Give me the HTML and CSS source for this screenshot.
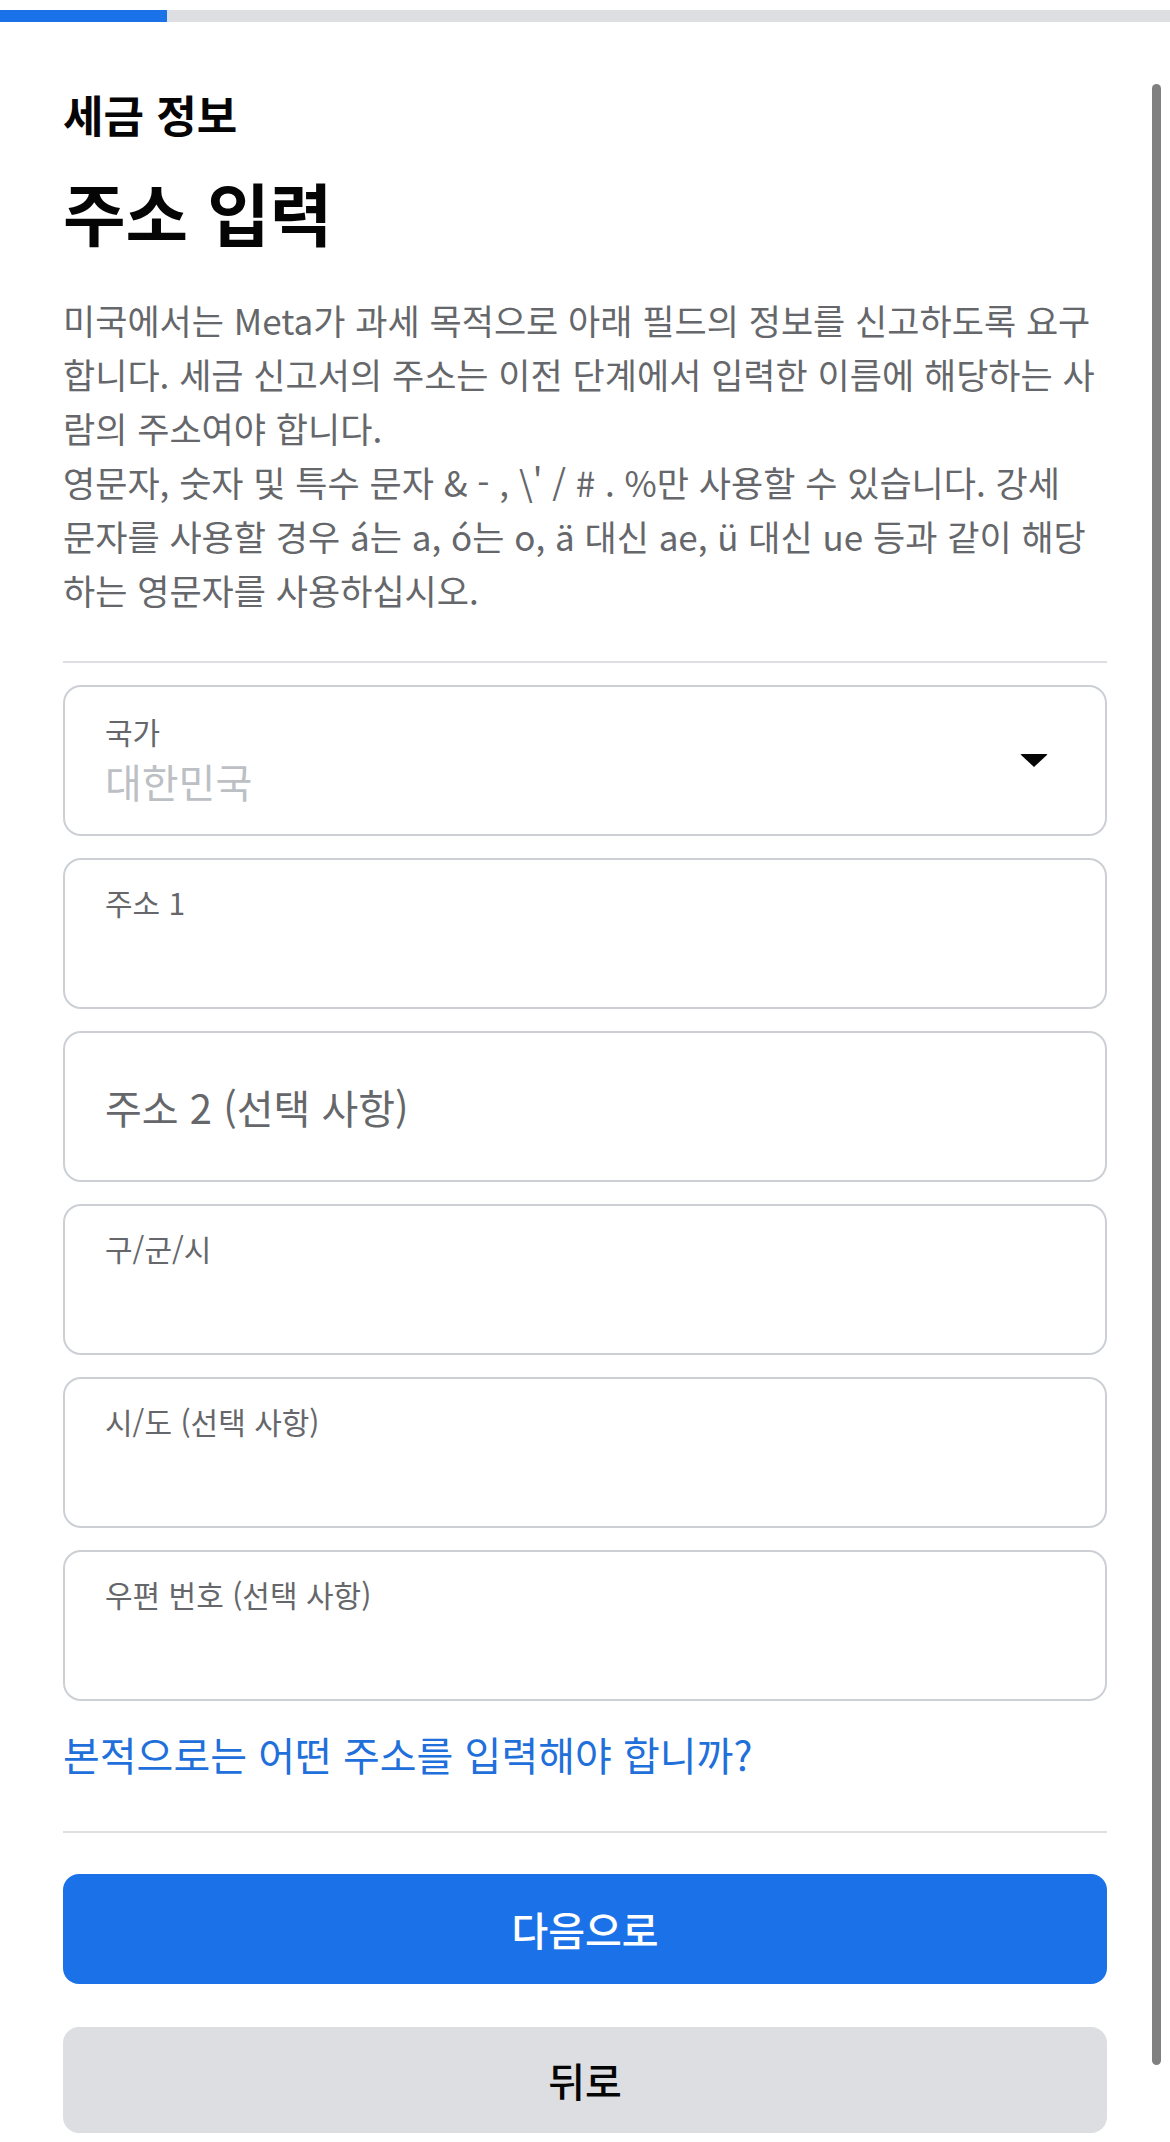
FILE: index.html
```html
<!DOCTYPE html>
<html lang="ko">
<head>
<meta charset="utf-8">
<title>주소 입력</title>
<link rel="stylesheet" href="styles.css">
</head>
<body>
<div class="progress"><div class="progress-fill"></div></div>
<main class="page">
  <h2 class="section">세금 정보</h2>
  <h1 class="title">주소 입력</h1>
  <p class="desc">미국에서는 Meta가 과세 목적으로 아래 필드의 정보를 신고하도록 요구<br>합니다. 세금 신고서의 주소는 이전 단계에서 입력한 이름에 해당하는 사<br>람의 주소여야 합니다.<br>영문자, 숫자 및 특수 문자 &amp; - , \' / # . %만 사용할 수 있습니다. 강세<br>문자를 사용할 경우 á는 a, ó는 o, ä 대신 ae, ü 대신 ue 등과 같이 해당<br>하는 영문자를 사용하십시오.</p>
  <hr class="divider">
  <div class="fields">
    <div class="field field-select">
      <div class="field-body">
        <div class="label">국가</div>
        <div class="value">대한민국</div>
      </div>
      <span class="caret"></span>
    </div>
    <div class="field">
      <div class="field-body">
        <div class="label">주소 1</div>
      </div>
    </div>
    <div class="field field-empty">
      <div class="placeholder">주소 2 (선택 사항)</div>
    </div>
    <div class="field">
      <div class="field-body">
        <div class="label">구/군/시</div>
      </div>
    </div>
    <div class="field">
      <div class="field-body">
        <div class="label">시/도 (선택 사항)</div>
      </div>
    </div>
    <div class="field">
      <div class="field-body">
        <div class="label">우편 번호 (선택 사항)</div>
      </div>
    </div>
  </div>
  <a class="help" href="#">본적으로는 어떤 주소를 입력해야 합니까?</a>
  <hr class="divider divider-bottom">
  <div class="actions">
    <button class="btn btn-primary" type="button">다음으로</button>
    <button class="btn btn-secondary" type="button">뒤로</button>
  </div>
</main>
<div class="scroll-indicator"></div>
</body>
</html>
```
FILE: styles.css
```css
html, body {
  margin: 0;
  padding: 0;
  background: #ffffff;
}
body {
  font-family: "Noto Sans CJK KR", "Noto Sans", "Liberation Sans", sans-serif;
  color: #050505;
  position: relative;
  overflow: hidden;
  height: 2142px;
}
.progress {
  margin-top: 10px;
  height: 12px;
  background: #dcdee2;
}
.progress-fill {
  width: 167px;
  height: 100%;
  background: #1b72e8;
}
.page {
  padding: 0 63px;
  display: flex;
  flex-direction: column;
}
.section {
  margin: 67px 0 0;
  font-size: 44px;
  line-height: 50px;
  font-weight: 700;
  color: #050505;
}
.title {
  margin: 34px 0 0;
  font-size: 68px;
  line-height: 78px;
  font-weight: 700;
  color: #050505;
}
.desc {
  margin: 42px 0 0;
  font-size: 35px;
  line-height: 54px;
  color: #65676b;
}
.divider {
  margin: 44px 0 0;
  border: 0;
  height: 2px;
  background: #dddfe2;
}
.fields {
  margin-top: 22px;
  display: flex;
  flex-direction: column;
  gap: 22px;
}
.field {
  box-sizing: border-box;
  height: 151px;
  border: 2px solid #ccd0d5;
  border-radius: 18px;
  padding: 25px 40px 0;
  display: flex;
  align-items: flex-start;
}
.field-select {
  align-items: center;
  padding-top: 0;
  padding-right: 57px;
}
.field-body {
  flex: 1;
  display: flex;
  flex-direction: column;
}
.field-select .field-body {
  margin-top: -4px;
}
.label {
  font-size: 30px;
  line-height: 34px;
  color: #65676b;
}
.value {
  margin-top: 10px;
  font-size: 40px;
  line-height: 46px;
  color: #bcc0c4;
}
.field-empty {
  align-items: center;
  padding-top: 0;
}
.placeholder {
  font-size: 40px;
  line-height: 48px;
  color: #65676b;
}
.caret {
  width: 0;
  height: 0;
  border-left: 14px solid transparent;
  border-right: 14px solid transparent;
  border-top: 13px solid #050505;
  border-radius: 2px;
}
.help {
  margin-top: 28px;
  font-size: 40px;
  line-height: 50px;
  color: #216fdb;
  text-decoration: none;
}
.divider-bottom {
  margin-top: 52px;
}
.actions {
  margin-top: 41px;
  display: flex;
  flex-direction: column;
  gap: 43px;
}
.btn {
  border: 0;
  border-radius: 16px;
  font-family: "Noto Sans CJK KR", "Noto Sans", sans-serif;
  font-size: 40px;
  font-weight: 500;
  width: 100%;
  padding: 0;
}
.btn-primary {
  height: 110px;
  background: #1b72e8;
  color: #ffffff;
}
.btn-secondary {
  height: 106px;
  background: #dcdee2;
  color: #050505;
}
.scroll-indicator {
  position: absolute;
  top: 84px;
  right: 9px;
  width: 9px;
  height: 1981px;
  border-radius: 5px;
  background: #808080;
}
```
